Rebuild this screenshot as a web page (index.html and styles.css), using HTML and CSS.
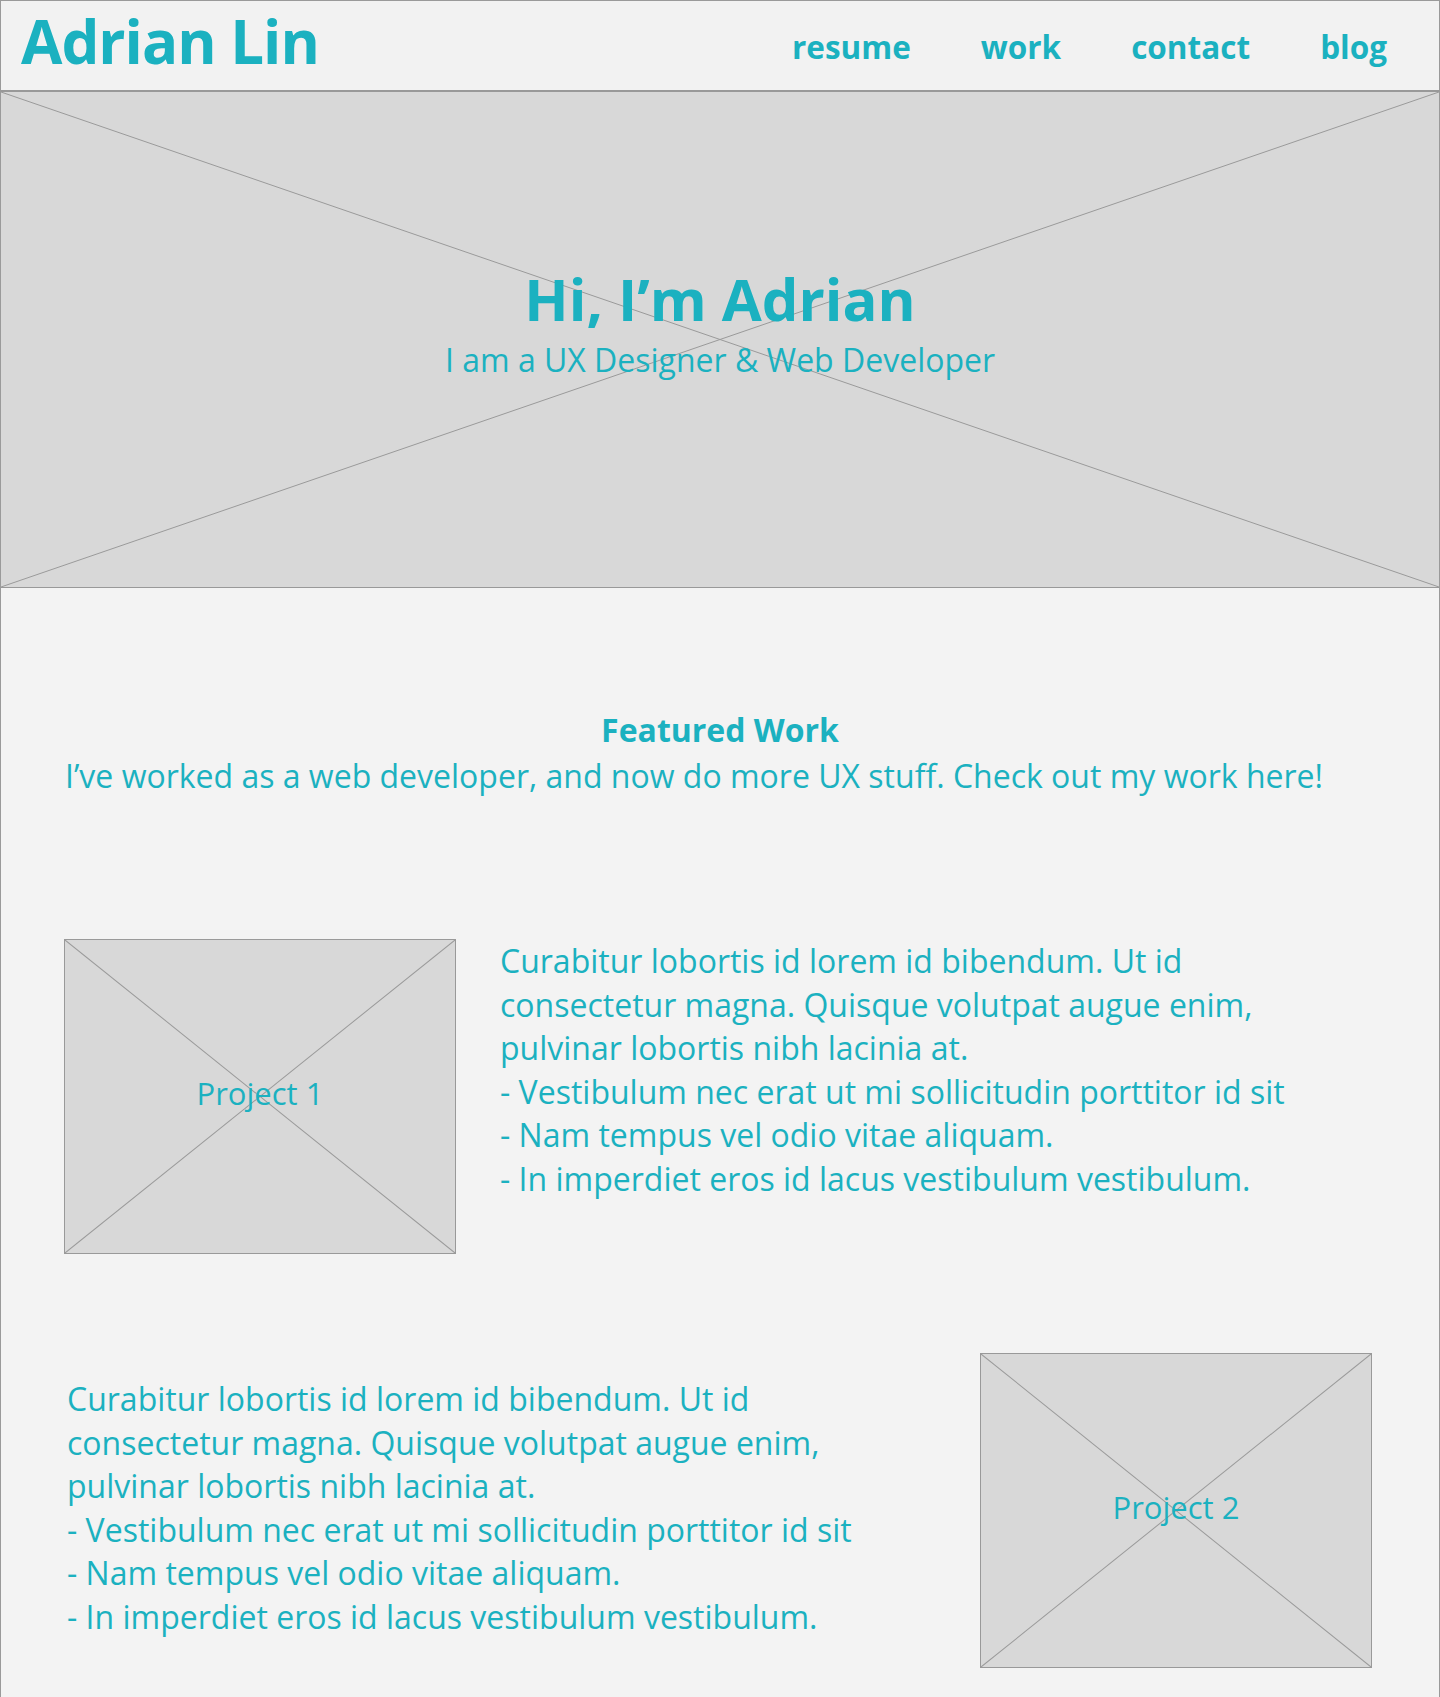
FILE: index.html
```html
<!DOCTYPE html>
<html lang="en">
<head>
<meta charset="utf-8">
<title>Adrian Lin</title>
<link rel="stylesheet" href="styles.css">
</head>
<body>
<div class="page">
  <header class="site-header">
    <div class="logo">Adrian Lin</div>
    <nav class="nav">
      <a href="#">resume</a>
      <a href="#">work</a>
      <a href="#">contact</a>
      <a href="#">blog</a>
    </nav>
  </header>

  <section class="hero">
    <svg class="xlines" viewBox="0 0 100 100" preserveAspectRatio="none" aria-hidden="true">
      <line x1="0" y1="0" x2="100" y2="100" vector-effect="non-scaling-stroke"/>
      <line x1="100" y1="0" x2="0" y2="100" vector-effect="non-scaling-stroke"/>
    </svg>
    <div class="hero-text">
      <h1 class="hero-title">Hi, I’m Adrian</h1>
      <p class="hero-sub">I am a UX Designer &amp; Web Developer</p>
    </div>
  </section>

  <section class="featured">
    <h2 class="featured-title">Featured Work</h2>
    <p class="featured-intro">I’ve worked as a web developer, and now do more UX stuff. Check out my work here!</p>
  </section>

  <section class="project project-one">
    <div class="placeholder">
      <svg class="xlines" viewBox="0 0 100 100" preserveAspectRatio="none" aria-hidden="true">
        <line x1="0" y1="0" x2="100" y2="100" vector-effect="non-scaling-stroke"/>
        <line x1="100" y1="0" x2="0" y2="100" vector-effect="non-scaling-stroke"/>
      </svg>
      <span class="placeholder-label">Project 1</span>
    </div>
    <p class="project-text">Curabitur lobortis id lorem id bibendum. Ut id<br>consectetur magna. Quisque volutpat augue enim,<br>pulvinar lobortis nibh lacinia at.<br>- Vestibulum nec erat ut mi sollicitudin porttitor id sit<br>- Nam tempus vel odio vitae aliquam.<br>- In imperdiet eros id lacus vestibulum vestibulum.</p>
  </section>

  <section class="project project-two">
    <p class="project-text">Curabitur lobortis id lorem id bibendum. Ut id<br>consectetur magna. Quisque volutpat augue enim,<br>pulvinar lobortis nibh lacinia at.<br>- Vestibulum nec erat ut mi sollicitudin porttitor id sit<br>- Nam tempus vel odio vitae aliquam.<br>- In imperdiet eros id lacus vestibulum vestibulum.</p>
    <div class="placeholder">
      <svg class="xlines" viewBox="0 0 100 100" preserveAspectRatio="none" aria-hidden="true">
        <line x1="0" y1="0" x2="100" y2="100" vector-effect="non-scaling-stroke"/>
        <line x1="100" y1="0" x2="0" y2="100" vector-effect="non-scaling-stroke"/>
      </svg>
      <span class="placeholder-label">Project 2</span>
    </div>
  </section>
</div>
</body>
</html>
```

FILE: styles.css
```css
* {
  box-sizing: border-box;
}

html, body {
  margin: 0;
  padding: 0;
}

body {
  background: #f3f3f3;
  font-family: "Open Sans", "Noto Sans", Arial, sans-serif;
  color: #1bb1c0;
}

.page {
  width: 1440px;
  min-height: 1697px;
  border-top: 1px solid #9a9a9a;
  border-left: 1px solid #9a9a9a;
  border-right: 1px solid #9a9a9a;
  background: #f3f3f3;
}

/* Header */
.site-header {
  height: 91px;
  background: #f2f2f2;
  border-bottom: 2px solid #999;
  display: flex;
  justify-content: space-between;
  align-items: flex-start;
  padding: 0 52px 0 20px;
}

.logo {
  font-size: 60px;
  font-weight: 700;
  line-height: 60px;
  letter-spacing: -1px;
  padding-top: 10px;
}

.nav {
  display: flex;
  gap: 70px;
  padding-top: 26px;
}

.nav a {
  color: #1bb1c0;
  text-decoration: none;
  font-size: 31.5px;
  font-weight: 700;
  line-height: 40px;
}

/* Hero */
.hero {
  position: relative;
  height: 496px;
  background: #d8d8d8;
  border-bottom: 1px solid #999;
}

.xlines {
  position: absolute;
  inset: 0;
  width: 100%;
  height: 100%;
}

.xlines line {
  stroke: #9a9a9a;
  stroke-width: 1;
}

.hero-text {
  position: relative;
  text-align: center;
  padding-top: 172px;
}

.hero-title {
  margin: 0;
  font-size: 58px;
  font-weight: 700;
  line-height: 70px;
}

.hero-sub {
  margin: 6px 0 0;
  font-size: 32px;
  font-weight: 400;
  line-height: 40px;
}

/* Featured */
.featured {
  padding: 122px 64px 0;
}

.featured-title {
  margin: 0;
  text-align: center;
  font-size: 32px;
  font-weight: 700;
  line-height: 40px;
}

.featured-intro {
  margin: 5px 0 0;
  font-size: 32px;
  font-weight: 400;
  line-height: 41px;
  white-space: nowrap;
}

/* Projects */
.project {
  display: flex;
  align-items: flex-start;
}

.project-one {
  padding: 143px 0 0 63px;
  gap: 44px;
}

.project-two {
  padding: 99px 67px 0 66px;
  justify-content: space-between;
}

.placeholder {
  position: relative;
  flex: none;
  width: 392px;
  height: 315px;
  background: #d8d8d8;
  border: 1px solid #999;
  display: flex;
  align-items: center;
  justify-content: center;
}

.placeholder-label {
  position: relative;
  font-size: 31px;
  font-weight: 400;
  margin-bottom: 7px;
}

.project-text {
  margin: 0;
  font-size: 32px;
  font-weight: 400;
  line-height: 43.6px;
  white-space: nowrap;
}

.project-two .project-text {
  margin-top: 24px;
}
```
